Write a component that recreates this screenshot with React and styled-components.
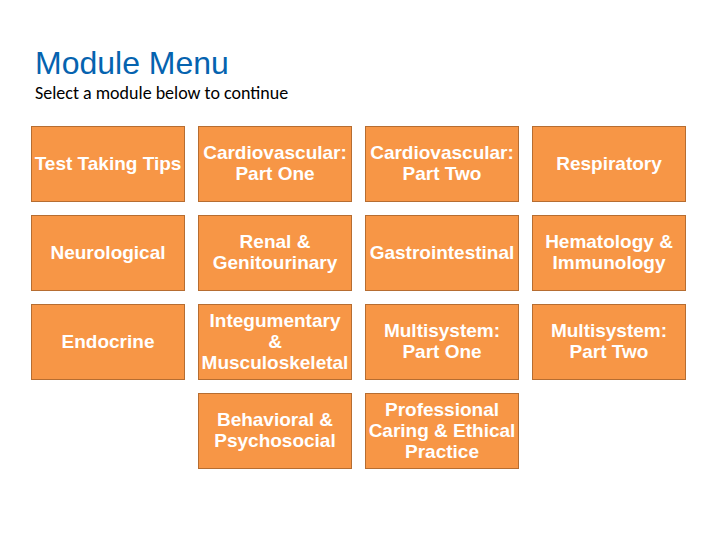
import React from "react";
import styled, { createGlobalStyle } from "styled-components";

const GlobalStyle = createGlobalStyle`
  *, *::before, *::after { box-sizing: border-box; }
  body { margin: 0; background: #ffffff; }
`;

const Page = styled.main`
  padding: 44px 34px 48px 31px;
  font-family: "Liberation Sans", Arial, sans-serif;
`;

const Header = styled.header`
  padding-left: 4px;
  margin-bottom: 22px;
`;

const Title = styled.h1`
  margin: 0;
  font-size: 32px;
  line-height: 38px;
  font-weight: 400;
  color: #0563af;
`;

const Subtitle = styled.p`
  margin: 0;
  font-family: Carlito, Lato, sans-serif;
  font-size: 18px;
  line-height: 22px;
  color: #000000;
`;

const ModuleGrid = styled.nav`
  display: grid;
  grid-template-columns: repeat(4, 1fr);
  grid-auto-rows: minmax(76px, auto);
  gap: 13px;
`;

const ModuleButton = styled.button`
  grid-column: ${({ $column }) => $column || "auto"};
  display: flex;
  align-items: center;
  justify-content: center;
  padding: 0 2px 2px;
  border: 1px solid #b66d31;
  border-radius: 0;
  background: #f79646;
  color: #ffffff;
  font-family: inherit;
  font-size: 19px;
  line-height: 21px;
  font-weight: 700;
  text-align: center;
  white-space: pre-line;
  cursor: pointer;
`;

const modules = [
  { label: "Test Taking Tips" },
  { label: "Cardiovascular:\nPart One" },
  { label: "Cardiovascular:\nPart Two" },
  { label: "Respiratory" },
  { label: "Neurological" },
  { label: "Renal &\nGenitourinary" },
  { label: "Gastrointestinal" },
  { label: "Hematology &\nImmunology" },
  { label: "Endocrine" },
  { label: "Integumentary\n&\nMusculoskeletal" },
  { label: "Multisystem:\nPart One" },
  { label: "Multisystem:\nPart Two" },
  { label: "Behavioral &\nPsychosocial", column: 2 },
  { label: "Professional\nCaring & Ethical\nPractice", column: 3 },
];

export default function App() {
  return (
    <>
      <GlobalStyle />
      <Page>
        <Header>
          <Title>Module Menu</Title>
          <Subtitle>Select a module below to continue</Subtitle>
        </Header>
        <ModuleGrid aria-label="Modules">
          {modules.map(({ label, column }) => (
            <ModuleButton key={label} type="button" $column={column}>
              {label}
            </ModuleButton>
          ))}
        </ModuleGrid>
      </Page>
    </>
  );
}
